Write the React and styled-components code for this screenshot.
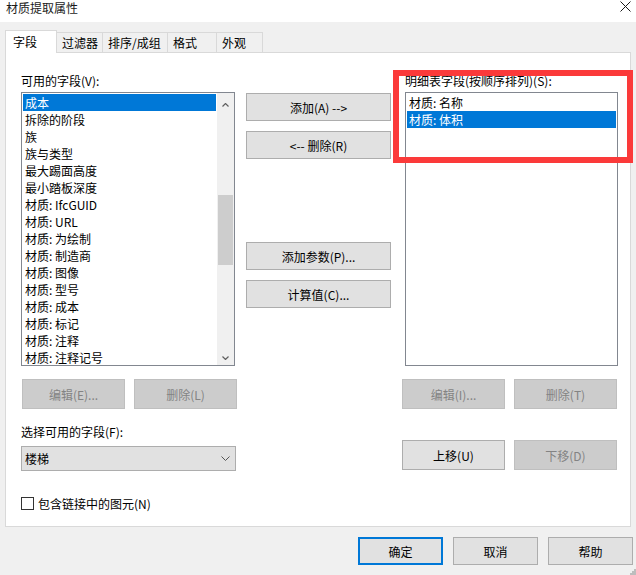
import React from "react";
import styled, { createGlobalStyle } from "styled-components";

const availableFields = [
  "成本",
  "拆除的阶段",
  "族",
  "族与类型",
  "最大踢面高度",
  "最小踏板深度",
  "材质: IfcGUID",
  "材质: URL",
  "材质: 为绘制",
  "材质: 制造商",
  "材质: 图像",
  "材质: 型号",
  "材质: 成本",
  "材质: 标记",
  "材质: 注释",
  "材质: 注释记号",
];

const scheduleFields = ["材质: 名称", "材质: 体积"];

const tabs = [
  { label: "字段", width: 52, active: true },
  { label: "过滤器", width: 46 },
  { label: "排序/成组", width: 65 },
  { label: "格式", width: 49 },
  { label: "外观", width: 46 },
];

const App = () => {
  return (
    <>
      <GlobalStyle />
      <Window>
        <TitleBar>
          <Title>材质提取属性</Title>
          <CloseIcon width="11" height="11" viewBox="0 0 11 11">
            <path d="M0.5 0.5 L10.5 10.5 M10.5 0.5 L0.5 10.5" stroke="#1a1a1a" strokeWidth="1" />
          </CloseIcon>
        </TitleBar>

        <TabArea>
          <TabStrip>
            {tabs.map((t, i) => (
              <Tab key={t.label} $active={t.active} $first={i === 0} style={{ width: t.width }}>
                {t.label}
              </Tab>
            ))}
          </TabStrip>

          <Panel>
            {/* Available fields */}
            <LeftColumn>
              <FieldLabel>可用的字段(V):</FieldLabel>
              <ListBox>
                <ListItems>
                  {availableFields.map((f, i) => (
                    <ListItem key={f} $selected={i === 0}>{f}</ListItem>
                  ))}
                </ListItems>
                <ScrollBar>
                  <ScrollArrow width="7" height="4" viewBox="0 0 7 4">
                    <polyline points="0.5,3.5 3.5,0.5 6.5,3.5" fill="none" stroke="#606060" strokeWidth="1.2" />
                  </ScrollArrow>
                  <ScrollTrack>
                    <ScrollThumb />
                  </ScrollTrack>
                  <ScrollArrow width="7" height="4" viewBox="0 0 7 4">
                    <polyline points="0.5,0.5 3.5,3.5 6.5,0.5" fill="none" stroke="#606060" strokeWidth="1.2" />
                  </ScrollArrow>
                </ScrollBar>
              </ListBox>
              <ButtonRow $offset={1}>
                <SmallButton disabled>编辑(E)...</SmallButton>
                <SmallButton disabled>删除(L)</SmallButton>
              </ButtonRow>
              <FieldLabel $top={14}>选择可用的字段(F):</FieldLabel>
              <Dropdown>
                <span>楼梯</span>
                <svg width="9" height="5" viewBox="0 0 9 5">
                  <polyline points="0.5,0.5 4.5,4.5 8.5,0.5" fill="none" stroke="#555" strokeWidth="1" />
                </svg>
              </Dropdown>
              <CheckRow>
                <CheckBox />
                <span>包含链接中的图元(N)</span>
              </CheckRow>
            </LeftColumn>

            {/* Move buttons */}
            <MiddleColumn>
              <WideButton>添加(A) --&gt;</WideButton>
              <WideButton $gap={10}>&lt;-- 删除(R)</WideButton>
              <WideButton $gap={83}>添加参数(P)...</WideButton>
              <WideButton $gap={10}>计算值(C)...</WideButton>
            </MiddleColumn>

            {/* Schedule fields */}
            <RightColumn>
              <FieldLabel $indent={3}>明细表字段(按顺序排列)(S):</FieldLabel>
              <ListBox $indent={3}>
                <ListItems>
                  {scheduleFields.map((f, i) => (
                    <ListItem key={f} $selected={i === 1}>{f}</ListItem>
                  ))}
                </ListItems>
              </ListBox>
              <ButtonRow>
                <SmallButton disabled>编辑(I)...</SmallButton>
                <SmallButton disabled>删除(T)</SmallButton>
              </ButtonRow>
              <ButtonRow $top={31}>
                <SmallButton>上移(U)</SmallButton>
                <SmallButton disabled>下移(D)</SmallButton>
              </ButtonRow>
            </RightColumn>
          </Panel>
        </TabArea>

        <Footer>
          <DialogButton $default>确定</DialogButton>
          <DialogButton>取消</DialogButton>
          <DialogButton>帮助</DialogButton>
        </Footer>

        <Highlight />
        <Grip width="6" height="6" viewBox="0 0 6 6">
          <rect x="4" y="0" width="2" height="2" fill="#bdbdbd" />
          <rect x="2" y="2" width="2" height="2" fill="#bdbdbd" />
          <rect x="4" y="2" width="2" height="2" fill="#bdbdbd" />
          <rect x="0" y="4" width="2" height="2" fill="#bdbdbd" />
          <rect x="2" y="4" width="2" height="2" fill="#bdbdbd" />
          <rect x="4" y="4" width="2" height="2" fill="#bdbdbd" />
        </Grip>
      </Window>
    </>
  );
};

export default App;

const GlobalStyle = createGlobalStyle`
  html, body {
    margin: 0;
    padding: 0;
    background: #f0f0f0;
  }
  * {
    box-sizing: border-box;
  }
  body {
    font-family: "Noto Sans CJK SC", "Noto Sans", "Liberation Sans", sans-serif;
    font-size: 12px;
    color: #000;
  }
`;

const Window = styled.div`
  position: relative;
  width: 636px;
  height: 575px;
  background: #f0f0f0;
  overflow: hidden;
`;

const TitleBar = styled.div`
  height: 22px;
  background: #fff;
  display: flex;
  justify-content: space-between;
  align-items: flex-start;
`;

const Title = styled.div`
  padding-left: 6px;
  line-height: 15px;
  font-size: 12px;
  color: #1a1a1a;
`;

const CloseIcon = styled.svg`
  margin: 1px 5px 0 0;
`;

const TabArea = styled.div`
  padding: 9px 5px 0;
`;

const TabStrip = styled.div`
  position: relative;
  z-index: 1;
  display: flex;
  align-items: flex-end;
  height: 22px;
  margin-bottom: -1px;
`;

const Tab = styled.div`
  height: ${(p) => (p.$active ? "23px" : "20px")};
  margin-bottom: ${(p) => (p.$active ? "0" : "1px")};
  background: ${(p) => (p.$active ? "#fff" : "#f0f0f0")};
  border-top: 1px solid #d9d9d9;
  border-right: 1px solid #d9d9d9;
  border-left: ${(p) => (p.$first ? "1px solid #d9d9d9" : "none")};
  padding-left: ${(p) => (p.$active ? "7px" : "5px")};
  line-height: ${(p) => (p.$active ? "21px" : "19px")};
  white-space: nowrap;
`;

const Panel = styled.div`
  height: 475px;
  background: #fff;
  border: 1px solid #d9d9d9;
  padding: 19px 0 0 15px;
  display: flex;
  align-items: flex-start;
`;

const LeftColumn = styled.div`
  width: 216px;
  display: flex;
  flex-direction: column;
`;

const MiddleColumn = styled.div`
  width: 145px;
  margin: 21px 0 0 9px;
  display: flex;
  flex-direction: column;
`;

const RightColumn = styled.div`
  width: 216px;
  margin-left: 11px;
  display: flex;
  flex-direction: column;
`;

const FieldLabel = styled.div`
  height: 17px;
  line-height: 17px;
  margin: ${(p) => p.$top || 0}px 0 3px ${(p) => p.$indent || 0}px;
  white-space: nowrap;
`;

const ListBox = styled.div`
  width: ${(p) => (p.$indent ? "213px" : "214px")};
  height: 274px;
  margin-left: ${(p) => p.$indent || 0}px;
  border: 1px solid #828790;
  display: flex;
  background: #fff;
`;

const ListItems = styled.div`
  flex: 1;
  padding: 1px;
  overflow: hidden;
`;

const ListItem = styled.div`
  height: 17px;
  line-height: 17px;
  padding-left: 2px;
  white-space: nowrap;
  background: ${(p) => (p.$selected ? "#0078d7" : "transparent")};
  color: ${(p) => (p.$selected ? "#fff" : "#000")};
`;

const ScrollBar = styled.div`
  width: 17px;
  background: #f0f0f0;
  display: flex;
  flex-direction: column;
  align-items: center;
  padding: 10px 0 5px;
`;

const ScrollArrow = styled.svg`
  flex: none;
`;

const ScrollTrack = styled.div`
  flex: 1;
  width: 100%;
  padding: 0 1px;
  display: flex;
  flex-direction: column;
  padding-top: 88px;
`;

const ScrollThumb = styled.div`
  height: 70px;
  background: #cdcdcd;
`;

const ButtonRow = styled.div`
  display: flex;
  gap: 9px;
  margin-top: ${(p) => (p.$top != null ? p.$top : 13)}px;
  margin-left: ${(p) => p.$offset || 0}px;
`;

const SmallButton = styled.button`
  width: 103px;
  height: 30px;
  padding: 0;
  font: inherit;
  font-size: 12px;
  background: ${(p) => (p.disabled ? "#cccccc" : "#e1e1e1")};
  border: 1px solid ${(p) => (p.disabled ? "#bfbfbf" : "#adadad")};
  color: ${(p) => (p.disabled ? "#838383" : "#000")};
`;

const WideButton = styled.button`
  width: 145px;
  height: 28px;
  margin-top: ${(p) => p.$gap || 0}px;
  padding: 0;
  font: inherit;
  font-size: 12px;
  background: #e1e1e1;
  border: 1px solid #adadad;
  color: #000;
`;

const Dropdown = styled.div`
  width: 215px;
  height: 25px;
  margin-top: 3px;
  background: #e1e1e1;
  border: 1px solid #adadad;
  display: flex;
  align-items: center;
  justify-content: space-between;
  padding: 0 5px 0 3px;
`;

const CheckRow = styled.div`
  display: flex;
  align-items: center;
  gap: 4px;
  margin-top: 26px;
  height: 13px;
  line-height: 13px;
`;

const CheckBox = styled.span`
  width: 13px;
  height: 13px;
  border: 1px solid #333;
  background: #fff;
`;

const Footer = styled.div`
  display: flex;
  justify-content: flex-end;
  gap: 10px;
  padding: 10px 3px 0 0;
`;

const DialogButton = styled.button`
  width: 85px;
  height: 28px;
  padding: 0;
  font: inherit;
  font-size: 12px;
  background: #e1e1e1;
  border: ${(p) => (p.$default ? "2px solid #0078d7" : "1px solid #adadad")};
  color: #000;
`;

const Highlight = styled.div`
  position: absolute;
  left: 393px;
  top: 70px;
  width: 240px;
  height: 93px;
  border: 6px solid #fb3a3a;
  pointer-events: none;
`;

const Grip = styled.svg`
  position: absolute;
  right: 0;
  bottom: 0;
`;
